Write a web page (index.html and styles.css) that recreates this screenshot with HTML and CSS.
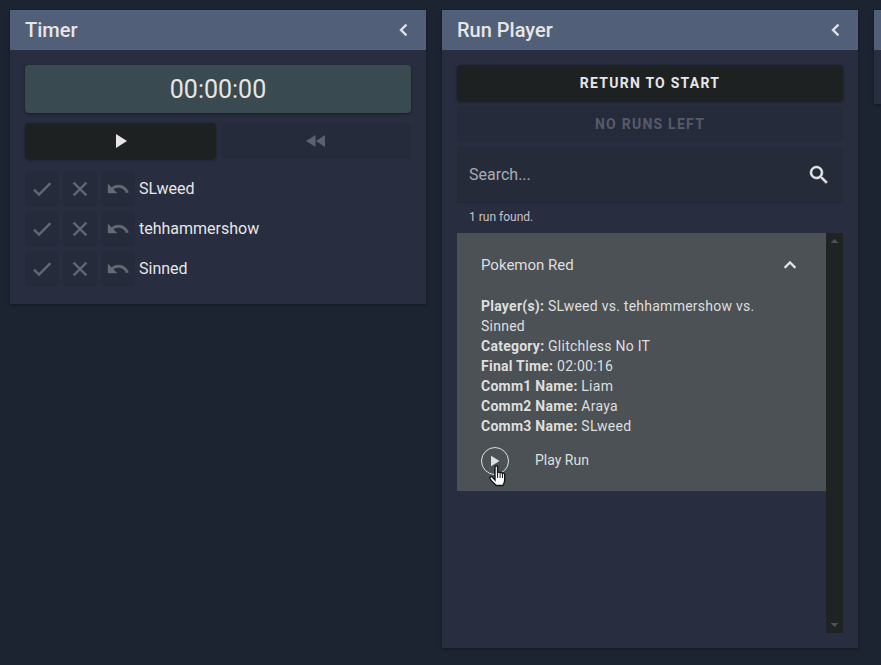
FILE: index.html

```html
<!DOCTYPE html>
<html lang="en">
<head>
  <meta charset="UTF-8">
  <title>Dashboard</title>
  <link rel="stylesheet" href="styles.css">
</head>
<body>
  <div class="panel">
    <div class="panel-header">
      <span>Timer</span>
      <svg class="chevron" width="24" height="24" viewBox="0 0 24 24"><path d="M15 7.400 13.600 6l-6 6 6 6 1.400-1.400L10.400 12z"/></svg>
    </div>
    <div class="panel-body">
      <div class="timer-display">00:00:00</div>
      <div class="timer-buttons">
        <div class="btn btn-dark btn-grow">
          <svg width="24" height="24" viewBox="0 0 24 24"><path class="icon-light" d="M8 5v14l11-7z"/></svg>
        </div>
        <div class="btn btn-off btn-grow">
          <svg width="24" height="24" viewBox="0 0 24 24"><path class="icon-dim" d="M11.500 18V6L2 12zm.500-6 9 6V6z"/></svg>
        </div>
      </div>
      <div class="runner">
        <div class="small-btn"><svg width="24" height="24" viewBox="0 0 24 24"><use href="#i-check"/></svg></div>
        <div class="small-btn"><svg width="24" height="24" viewBox="0 0 24 24"><use href="#i-close"/></svg></div>
        <div class="small-btn"><svg width="24" height="24" viewBox="0 0 24 24"><use href="#i-undo"/></svg></div>
        <span>SLweed</span>
      </div>
      <div class="runner">
        <div class="small-btn"><svg width="24" height="24" viewBox="0 0 24 24"><use href="#i-check"/></svg></div>
        <div class="small-btn"><svg width="24" height="24" viewBox="0 0 24 24"><use href="#i-close"/></svg></div>
        <div class="small-btn"><svg width="24" height="24" viewBox="0 0 24 24"><use href="#i-undo"/></svg></div>
        <span>tehhammershow</span>
      </div>
      <div class="runner">
        <div class="small-btn"><svg width="24" height="24" viewBox="0 0 24 24"><use href="#i-check"/></svg></div>
        <div class="small-btn"><svg width="24" height="24" viewBox="0 0 24 24"><use href="#i-close"/></svg></div>
        <div class="small-btn"><svg width="24" height="24" viewBox="0 0 24 24"><use href="#i-undo"/></svg></div>
        <span>Sinned</span>
      </div>
    </div>
  </div>

  <div class="panel">
    <div class="panel-header">
      <span>Run Player</span>
      <svg class="chevron" width="24" height="24" viewBox="0 0 24 24"><path d="M15 7.400 13.600 6l-6 6 6 6 1.400-1.400L10.400 12z"/></svg>
    </div>
    <div class="panel-body">
      <div class="btn btn-dark btn-text">Return to start</div>
      <div class="btn btn-off btn-text btn-next">No runs left</div>
      <div class="search">
        <span>Search...</span>
        <svg width="24" height="24" viewBox="0 0 24 24"><path d="M15.500 14h-.79l-.28-.27A6.470 6.470 0 0 0 16 9.500 6.500 6.500 0 1 0 9.500 16c1.610 0 3.090-.59 4.230-1.570l.27.28v.79l5 4.990L20.490 19zm-6 0C7.010 14 5 11.990 5 9.500S7.010 5 9.500 5 14 7.010 14 9.500 11.990 14 9.500 14z"/></svg>
      </div>
      <div class="found">1 run found.</div>
      <div class="run-list">
        <div class="run-scroll">
          <div class="run-card">
            <div class="run-title">
              <span>Pokemon Red</span>
              <svg width="24" height="24" viewBox="0 0 24 24"><path d="M7.400 15.400 6 14l6-6 6 6-1.400 1.400L12 10.800z"/></svg>
            </div>
            <div class="run-info">
              <b>Player(s):</b> SLweed vs. tehhammershow vs. Sinned<br>
              <b>Category:</b> Glitchless No IT<br>
              <b>Final Time:</b> 02:00:16<br>
              <b>Comm1 Name:</b> Liam<br>
              <b>Comm2 Name:</b> Araya<br>
              <b>Comm3 Name:</b> SLweed
            </div>
            <div class="run-action">
              <div class="play-circle">
                <svg class="play-icon" width="16" height="16" viewBox="0 0 14 14"><path d="M3.500 2.500v9l7.500-4.500z"/></svg>
                <svg class="cursor" width="18" height="23" viewBox="0 0 18 23"><path d="M6 2c0-1.600 2.600-1.600 2.600 0v6c.3-1.200 2.300-1.200 2.500.2.300-1 2.200-1 2.400.4.400-.8 2.200-.6 2.200 1v5.400c0 2.500-1 3.500-1.800 5.500H7.200C5.800 19 3 17 1.200 14 .2 12 2.200 10.800 3.500 12.400L6 15z"/><path class="cursor-line" d="M8.600 8v5M11.100 8.500V13M13.500 9v4"/></svg>
              </div>
              <span>Play Run</span>
            </div>
          </div>
        </div>
        <div class="scrollbar">
          <svg width="17" height="17" viewBox="0 0 17 17"><path d="M8.500 6 4.500 10h8z"/></svg>
          <svg width="17" height="17" viewBox="0 0 17 17"><path d="M4.500 7h8l-4 4z"/></svg>
        </div>
      </div>
    </div>
  </div>

  <div class="panel panel-cut">
    <div class="panel-header"></div>
  </div>

  <svg class="icon-defs" width="0" height="0">
    <defs>
      <path id="i-check" d="M9 16.200 4.800 12l-1.400 1.400L9 19 21 7l-1.400-1.400z"/>
      <path id="i-close" d="M19 6.400 17.600 5 12 10.600 6.400 5 5 6.400 10.600 12 5 17.600 6.400 19 12 13.400 17.600 19 19 17.600 13.400 12z"/>
      <path id="i-undo" d="M12.500 8c-2.650 0-5.050.99-6.900 2.600L2 7v9h9l-3.620-3.620c1.390-1.160 3.160-1.880 5.120-1.880 3.540 0 6.550 2.310 7.600 5.500l2.370-.78C21.080 11.030 17.150 8 12.500 8z"/>
    </defs>
  </svg>
</body>
</html>
```

FILE: styles.css

```css
/* General Styling */
html, body {
  height: 100%;
}

body {
  margin: 0;
  padding: 10px;
  box-sizing: border-box;
  display: flex;
  align-items: flex-start;
  gap: 16px;
  overflow: hidden;
  background-color: #1c2331;
  color: #e6e6e6;
  font-family: Roboto, sans-serif;
  font-size: 16px;
}

.icon-defs {
  position: absolute;
}

/* Panels */
.panel {
  flex: 0 0 416px;
  background-color: #282d40;
  box-shadow: 0 1px 3px rgba(0, 0, 0, 0.35);
}

.panel-cut {
  height: 94px;
}

.panel-header {
  height: 40px;
  box-sizing: border-box;
  padding: 0 10px 0 15px;
  display: flex;
  align-items: center;
  justify-content: space-between;
  background-color: #525f78;
  font-size: 20px;
  font-weight: 500;
}

.chevron {
  fill: #e6e6e6;
  stroke: #e6e6e6;
  stroke-width: 0.4;
}

.panel-body {
  padding: 15px;
}

/* Timer */
.timer-display {
  height: 48px;
  display: flex;
  align-items: center;
  justify-content: center;
  border-radius: 4px;
  background-color: #394a50;
  box-shadow: 0 1px 3px rgba(0, 0, 0, 0.4);
  font-size: 25px;
}

.timer-buttons {
  display: flex;
  gap: 5px;
  margin: 10px 0 12px;
}

.btn {
  height: 36px;
  display: flex;
  align-items: center;
  justify-content: center;
  border-radius: 4px;
}

.btn-grow {
  flex: 1;
}

.btn-dark {
  background-color: #1e2122;
  box-shadow: 0 1px 3px rgba(0, 0, 0, 0.4);
}

.btn-off {
  background-color: #262b3c;
}

.btn-text {
  font-size: 14px;
  font-weight: 700;
  letter-spacing: 1.25px;
  text-transform: uppercase;
}

.btn-next {
  margin-top: 5px;
  color: #565b69;
}

.icon-light {
  fill: #e6e6e6;
}

.icon-dim {
  fill: #5c6170;
}

.runner {
  height: 36px;
  display: flex;
  align-items: center;
  gap: 4px;
  margin-bottom: 4px;
}

.runner:last-child {
  margin-bottom: 2px;
}

.runner span {
  margin-bottom: 2px;
  font-size: 16px;
}

.small-btn {
  width: 34px;
  height: 36px;
  display: flex;
  align-items: center;
  justify-content: center;
  border-radius: 5px;
  background-color: #262b3c;
  fill: #646974;
  stroke: #646974;
  stroke-width: 0.4;
}

/* Run player */
.search {
  height: 56px;
  box-sizing: border-box;
  margin-top: 5px;
  padding: 0 12px;
  display: flex;
  align-items: center;
  justify-content: space-between;
  background-color: #262b3a;
  border-bottom: 1px solid #222738;
  color: #a9abb2;
  fill: #e6e6e6;
  stroke: #e6e6e6;
  stroke-width: 0.5;
}

.found {
  height: 30px;
  box-sizing: border-box;
  padding: 7px 12px 0;
  font-size: 12px;
  color: #c4c5ca;
}

.run-list {
  height: 400px;
  display: flex;
}

.run-scroll {
  flex: 1;
}

.run-card {
  height: 258px;
  box-sizing: border-box;
  padding: 0 24px;
  background-color: #4c5155;
  font-size: 14px;
  color: #dedfdf;
}

.run-title {
  height: 63px;
  display: flex;
  align-items: center;
  justify-content: space-between;
  font-size: 15px;
  fill: #e6e6e6;
  stroke: #e6e6e6;
  stroke-width: 0.4;
}

.run-info {
  width: 300px;
  line-height: 20px;
  letter-spacing: 0.25px;
}

.run-info b {
  font-weight: 700;
}

.run-action {
  margin-top: 11px;
  display: flex;
  align-items: center;
  gap: 26px;
}

.run-action span {
  margin-bottom: 2px;
}

.play-circle {
  position: relative;
  width: 28px;
  height: 28px;
  box-sizing: border-box;
  display: flex;
  align-items: center;
  justify-content: center;
  border: 1px solid #dedfdf;
  border-radius: 50%;
}

.play-icon {
  fill: #dedfdf;
}

.cursor {
  position: absolute;
  left: 7px;
  top: 17px;
  fill: #fff;
  stroke: #14161c;
  stroke-width: 1.4;
}

.cursor-line {
  fill: none;
  stroke-width: 1;
}

.scrollbar {
  width: 17px;
  display: flex;
  flex-direction: column;
  justify-content: space-between;
  background-color: #1f2323;
  fill: #4d5256;
}
```
